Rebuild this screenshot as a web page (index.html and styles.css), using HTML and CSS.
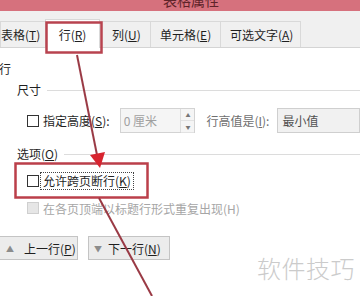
FILE: index.html
```html
<!DOCTYPE html>
<html lang="zh-CN">
<head>
  <meta charset="UTF-8" />
  <title>表格属性</title>
  <meta name="viewport" content="width=device-width, initial-scale=1.0" />
  <link rel="stylesheet" href="styles.css">
</head>
<body>
  <div class="dialog">
    <div class="titlebar"><span class="title">表格属性</span></div>

    <!-- Tabs -->
    <div class="tabbar">
      <div class="tab first">表格(<u>T</u>)</div>
      <div class="tab active">行(<u>R</u>)</div>
      <div class="tab">列(<u>U</u>)</div>
      <div class="tab">单元格(<u>E</u>)</div>
      <div class="tab">可选文字(<u>A</u>)</div>
    </div>

    <div class="panel">
      <div class="group-title">行</div>

      <div class="section"><span>尺寸</span><i class="rule"></i></div>
      <div class="size-row">
        <label class="check"><span class="box"></span>指定高度(<u>S</u>):</label>
        <div class="spin">
          <span class="value">0 厘米</span>
          <span class="arrows"><b>▲</b><b>▼</b></span>
        </div>
        <span class="muted">行高值是(<u>I</u>):</span>
        <div class="select">最小值</div>
      </div>

      <div class="section options"><span>选项(<u>O</u>)</span><i class="rule"></i></div>
      <label class="check row first-row"><span class="box"></span><span class="focus">允许跨页断行(<u>K</u>)</span></label>
      <label class="check row disabled"><span class="box"></span>在各页顶端以标题行形式重复出现(H)</label>

      <div class="nav">
        <button class="nav-btn prev"><span class="tri">▲</span>上一行(<u>P</u>)</button>
        <button class="nav-btn next"><span class="tri">▼</span>下一行(<u>N</u>)</button>
      </div>
    </div>

    <div class="watermark">软件技巧</div>

    <!-- red annotation marks drawn over the dialog -->
    <svg class="marks" width="360" height="296" viewBox="0 0 360 296">
      <rect x="46.5" y="22.5" width="55" height="30" fill="none" stroke="#b8434f" stroke-width="2.5" />
      <rect x="15.5" y="163.5" width="132" height="34" fill="none" stroke="#bb3f4a" stroke-width="2.5" />
      <line x1="77" y1="55" x2="97" y2="155" stroke="#9a3a45" stroke-width="2" />
      <polygon points="90,155 105,152 100,168" fill="#d8242f" />
      <line x1="99" y1="198" x2="152" y2="296" stroke="#9a3a45" stroke-width="2" />
    </svg>
  </div>
</body>
</html>
```

FILE: styles.css
```css
body {
  margin: 0;
  font-family: "Noto Sans CJK SC", "Noto Sans", sans-serif;
  font-size: 12px;
  color: #1f1f1f;
  background: #fff;
}

.dialog {
  position: relative;
  width: 360px;
  height: 296px;
  overflow: hidden;
  background: #fff;
}

.titlebar {
  height: 11px;
  background-color: #d6717d;
  overflow: hidden;
  text-align: center;
}

.title {
  display: block;
  margin: -8px 0 0 22px;
  font-size: 14px;
  line-height: 16px;
  color: #5e2329;
}

.tabbar {
  display: flex;
  align-items: flex-end;
  height: 37px;
  background-color: #f0f0f0;
  border-bottom: 1px solid #d4d4d4;
  box-sizing: border-box;
}

.tab {
  height: 26px;
  line-height: 25px;
  padding: 0 9px;
  box-sizing: border-box;
  border: 1px solid #d9d9d9;
  border-bottom: none;
  margin-left: -1px;
  background-color: #f0f0f0;
  white-space: nowrap;
}

.tab.first {
  width: 46px;
  padding-left: 0;
  margin-left: 0;
}

.tab.active {
  width: 55px;
  height: 29px;
  line-height: 30px;
  margin-bottom: -1px;
  background-color: #fff;
  text-align: center;
  padding: 0;
}

.tab:nth-child(3) {
  width: 52px;
  padding-left: 12px;
}

.tab:nth-child(4) {
  width: 71px;
}

.tab:nth-child(5) {
  width: 81px;
}

u {
  text-decoration: underline;
  text-underline-offset: 1px;
}

.panel {
  padding-top: 13px;
}

.group-title {
  line-height: 16px;
  height: 16px;
  margin-left: -1px;
}

.section {
  display: flex;
  align-items: center;
  height: 16px;
  line-height: 16px;
  padding-left: 17px;
  margin-top: 5px;
}

.section .rule {
  flex: 1;
  height: 1px;
  margin-left: 6px;
  background-color: #dcdcdc;
}

.section.options {
  margin-top: 13px;
}

.check {
  display: flex;
  align-items: center;
  white-space: nowrap;
}

.box {
  width: 12px;
  height: 12px;
  box-sizing: border-box;
  border: 1px solid #333;
  background: #fff;
  margin-right: 4px;
}

.size-row {
  display: flex;
  align-items: center;
  height: 25px;
  margin-top: 10px;
  padding-left: 27px;
  white-space: nowrap;
}

.spin {
  display: flex;
  width: 83px;
  height: 25px;
  margin-left: 10px;
  box-sizing: border-box;
  border: 1px solid #d3d3d3;
  background-color: #f5f5f5;
}

.spin .value {
  flex: 1;
  line-height: 23px;
  padding-left: 3px;
  color: #a0a0a0;
}

.spin .arrows {
  display: flex;
  flex-direction: column;
  width: 13px;
  border-left: 1px solid #dedede;
}

.spin .arrows b {
  flex: 1;
  font-weight: normal;
  font-size: 5px;
  line-height: 11px;
  text-align: center;
  color: #777;
  border-bottom: 1px solid #e2e2e2;
}

.muted {
  margin-left: 11px;
  color: #6f6f6f;
}

.select {
  width: 90px;
  height: 25px;
  margin-left: 8px;
  box-sizing: border-box;
  border: 1px solid #cfcfcf;
  background-color: #f1f1f1;
  line-height: 23px;
  padding-left: 4px;
  color: #505050;
}

.row {
  height: 22px;
  padding-left: 27px;
}

.row.first-row {
  margin-top: 8px;
}

.focus {
  margin-left: -2px;
  padding: 0 2px;
  line-height: 16px;
  outline: 1px dotted #444;
}

.row.disabled {
  margin-top: 5px;
  color: #a6a6a6;
}

.row.disabled .box {
  border-color: #cfcfcf;
  background-color: #e6e6e6;
}

.nav {
  display: flex;
  margin-top: 17px;
}

.nav-btn {
  width: 82px;
  height: 24px;
  padding: 0;
  display: flex;
  align-items: center;
  box-sizing: border-box;
  border: 1px solid #c4c4c4;
  background-color: #ececec;
  font-family: inherit;
  font-size: 12px;
  color: #1f1f1f;
}

.nav-btn.prev {
  margin-left: -4px;
}

.nav-btn.next {
  margin-left: 10px;
}

.tri {
  font-size: 8px;
  color: #8c8c8c;
  margin: 0 10px 0 9px;
}

.nav-btn.next .tri {
  margin: 0 6px 0 5px;
}

.watermark {
  position: absolute;
  left: 257px;
  top: 252px;
  font-size: 24px;
  line-height: 32px;
  font-weight: 300;
  color: #cbcbcb;
  letter-spacing: 0.5px;
}

.marks {
  position: absolute;
  top: 0;
  left: 0;
  pointer-events: none;
}
```
